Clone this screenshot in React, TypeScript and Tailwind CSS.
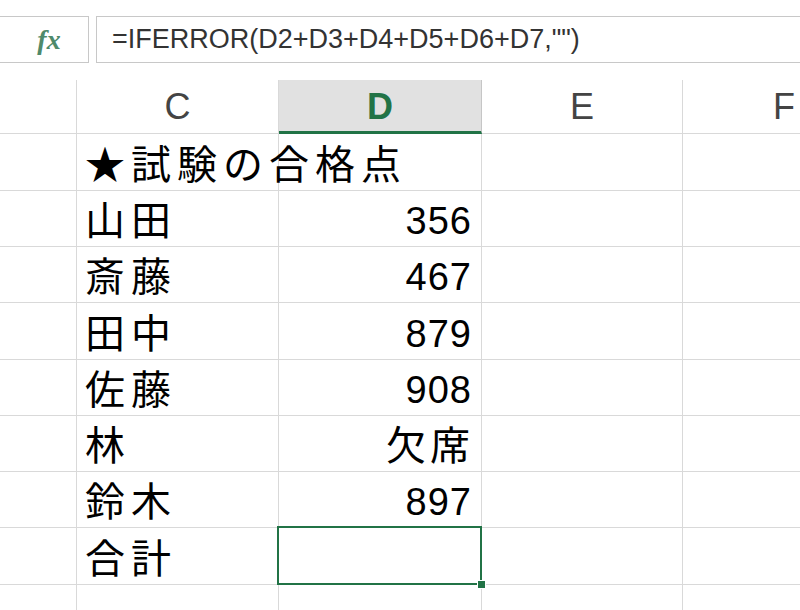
const ROWS: { name: string; value: string; h: string }[] = [
  { name: "★試験の合格点", value: "", h: "h-[57px]" },
  { name: "山田", value: "356", h: "h-[56px]" },
  { name: "斎藤", value: "467", h: "h-[56px]" },
  { name: "田中", value: "879", h: "h-[57px]" },
  { name: "佐藤", value: "908", h: "h-[56px]" },
  { name: "林", value: "欠席", h: "h-[56px]" },
  { name: "鈴木", value: "897", h: "h-[56px]" },
  { name: "合計", value: "", h: "h-[57px]" },
];

const CELL_FONT = { fontFamily: '"Liberation Sans", "Noto Sans CJK JP", sans-serif' };

function Row({ name, value, h, selected }: { name: string; value: string; h: string; selected: boolean }) {
  const line = "border-b border-r border-[#d9d9d9]";
  const isNum = /\d/.test(value);
  return (
    <>
      <div className={`${h} ${line}`} />
      <div className={`${h} ${line} flex items-center pl-[8px] pt-[5px] text-[40px] leading-none text-black tracking-[6px] whitespace-nowrap`}>
        {name}
      </div>
      <div
        className={`${h} ${line} relative flex items-center justify-end pt-[5px] leading-none text-black ${
          isNum ? "text-[38px] tracking-[1px] pr-[9px]" : "text-[40px] tracking-[4px] pr-[7px]"
        }`}
      >
        {value}
        {selected && (
          <>
            <div className="absolute -top-[2px] -left-[2px] -right-[1px] -bottom-[1px] border-2 border-[#217346]" />
            <div className="absolute -right-[5px] -bottom-[5px] w-[9px] h-[9px] bg-[#217346] border border-white" />
          </>
        )}
      </div>
      <div className={`${h} ${line}`} />
      <div className={`${h} border-b border-[#d9d9d9]`} />
    </>
  );
}

export default function App() {
  return (
    <div className="w-[800px] h-[610px] overflow-hidden bg-white" style={CELL_FONT}>
      {/* Formula bar */}
      <div className="pt-[16px] flex gap-[7px] h-[63px]">
        <div className="w-[89px] border border-l-0 border-[#c8c8c8] flex items-center justify-center pl-[10px]">
          <span
            className="italic font-bold text-[28px] text-[#4f8a6b] leading-none"
            style={{ fontFamily: '"Liberation Serif", "DejaVu Serif", serif' }}
          >
            fx
          </span>
        </div>
        <div className="flex-1 border border-r-0 border-[#c8c8c8] flex items-center pl-[15px]">
          <span className="text-[27px] text-[#333] leading-none">=IFERROR(D2+D3+D4+D5+D6+D7,"")</span>
        </div>
      </div>

      <div className="h-[17px]" />

      {/* Sheet grid */}
      <div className="grid grid-cols-[77px_202px_203px_201px_1fr]">
        <div className="h-[54px] border-b border-r border-[#d9d9d9]" />
        <div className="h-[54px] border-b border-r border-[#d9d9d9] flex items-center justify-center text-[36px] text-[#444]">C</div>
        <div className="h-[54px] border-b-[3px] border-r border-b-[#217346] border-r-[#c6c6c6] bg-[#e1e1e1] flex items-center justify-center pt-[2px] text-[36px] font-bold text-[#217346]">D</div>
        <div className="h-[54px] border-b border-r border-[#d9d9d9] flex items-center justify-center text-[36px] text-[#444]">E</div>
        <div className="h-[54px] border-b border-[#d9d9d9] flex items-center justify-end pr-[5px] text-[36px] text-[#444]">F</div>

        {ROWS.map((r, i) => (
          <Row key={i} name={r.name} value={r.value} h={r.h} selected={i === ROWS.length - 1} />
        ))}

        <div className="h-[40px] border-r border-[#d9d9d9]" />
        <div className="h-[40px] border-r border-[#d9d9d9]" />
        <div className="h-[40px] border-r border-[#d9d9d9]" />
        <div className="h-[40px] border-r border-[#d9d9d9]" />
        <div className="h-[40px]" />
      </div>
    </div>
  );
}
